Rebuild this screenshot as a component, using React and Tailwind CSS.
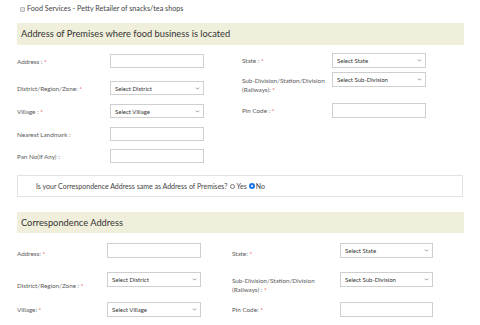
import { ChevronDown } from 'lucide-react';

const FONT = { fontFamily: 'Lato, "Open Sans", sans-serif' };

function Req() {
  return <span className="text-[#e53935]"> *</span>;
}

function TextBox({ w = 'w-[94px]', h = 'h-[14px]' }) {
  return <div className={`${w} ${h} border border-[#cfcfcf] bg-white`} />;
}

function SelectBox({ label, w = 'w-[94px]', h = 'h-[15px]' }) {
  return (
    <div className={`${w} ${h} flex items-center justify-between border border-[#cfcfcf] bg-white pl-[4px] pr-[3px] text-[6px] text-[#333]`}>
      <span>{label}</span>
      <ChevronDown className="h-[5px] w-[5px] text-[#555]" strokeWidth={3} />
    </div>
  );
}

function Label({ children, className = '' }) {
  return <div className={`text-[6.3px] leading-[9px] text-[#5a5a5a] ${className}`}>{children}</div>;
}

function SectionHeader({ title, h }) {
  return (
    <div className={`${h} flex items-center bg-[#f0efdc] pl-[4px] text-[9.3px] text-[#333]`}>
      {title}
    </div>
  );
}

export default function App() {
  return (
    <div className="min-h-[325px] w-[480px] bg-white pl-[17px] pr-[16px]" style={FONT}>
      {/* Business type */}
      <div className="flex h-[23px] items-start pt-[4px] pl-[3px]">
        <div className="flex items-center gap-[2px] text-[7.2px] text-[#444]">
          <span className="h-[5px] w-[5px] rounded-[1px] border border-[#bbb] bg-[#e6e6e6]" />
          <span>Food Services - Petty Retailer of snacks/tea shops</span>
        </div>
      </div>

      <SectionHeader title="Address of Premises where food business is located" h="h-[22px]" />

      <div className="flex pt-[9px]">
        <div className="flex w-[225px] flex-col">
          <div className="flex h-[14px] items-center">
            <Label className="w-[93px]">Address :<Req /></Label>
            <TextBox />
          </div>
          <div className="mt-[13px] flex h-[14px] items-center">
            <Label className="w-[93px]">District/Region/Zone:<Req /></Label>
            <SelectBox label="Select District" h="h-[14px]" />
          </div>
          <div className="mt-[9px] flex h-[14px] items-center">
            <Label className="w-[93px]">Village :<Req /></Label>
            <SelectBox label="Select Village" h="h-[14px]" />
          </div>
          <div className="mt-[9px] flex h-[14px] items-center">
            <Label className="w-[93px]">Nearest Landmark :</Label>
            <TextBox />
          </div>
          <div className="mt-[8px] flex h-[14px] items-center">
            <Label className="w-[93px]">Pan No(If Any) :</Label>
            <TextBox />
          </div>
        </div>

        <div className="flex flex-col">
          <div className="-mt-[1px] flex h-[15px] items-center">
            <Label className="w-[90px]">State :<Req /></Label>
            <SelectBox label="Select State" />
          </div>
          <div className="mt-[4px] flex items-start">
            <Label className="mt-[4px] w-[90px]">
              Sub-Division/Station/Division
              <br />
              (Railways):<Req />
            </Label>
            <SelectBox label="Select Sub-Division" />
          </div>
          <div className="mt-[9px] flex h-[15px] items-center">
            <Label className="w-[90px]">Pin Code :<Req /></Label>
            <TextBox h="h-[15px]" />
          </div>
        </div>
      </div>

      {/* Same address question */}
      <div className="mt-[12px] flex h-[22px] w-[446px] items-center border border-[#e3e3e3] pl-[18px] text-[7px] text-[#444]">
        <span>Is your Correspondence Address same as Address of Premises?</span>
        <span className="ml-[3px] flex items-center gap-[1px]">
          <span className="h-[5px] w-[5px] rounded-full border border-[#777] bg-white" />
          <span>Yes</span>
        </span>
        <span className="ml-[2px] flex items-center gap-[1px]">
          <span className="flex h-[6px] w-[6px] items-center justify-center rounded-full bg-[#1a73e8]">
            <span className="h-[2px] w-[2px] rounded-full bg-white" />
          </span>
          <span>No</span>
        </span>
      </div>

      <div className="mt-[15px]">
        <SectionHeader title="Correspondence Address" h="h-[21px]" />
      </div>

      <div className="pt-[10px]">
        <div className="flex h-[20px]">
          <Label className="mt-[6px] w-[90px]">Address:<Req /></Label>
          <div className="w-[125px]"><TextBox h="h-[15px]" /></div>
          <Label className="mt-[6px] w-[108px]">State:<Req /></Label>
          <SelectBox label="Select State" w="w-[93px]" />
        </div>
        <div className="mt-[9px] flex h-[26px]">
          <Label className="w-[90px] self-center">District/Region/Zone :<Req /></Label>
          <div className="w-[125px]"><SelectBox label="Select District" /></div>
          <Label className="w-[108px] self-center">
            Sub-Division/Station/Division
            <br />
            (Railways) :<Req />
          </Label>
          <SelectBox label="Select Sub-Division" w="w-[93px]" />
        </div>
        <div className="mt-[4px] flex h-[15px] items-center">
          <Label className="w-[90px]">Village:<Req /></Label>
          <div className="w-[125px]"><SelectBox label="Select Village" /></div>
          <Label className="w-[108px]">Pin Code:<Req /></Label>
          <TextBox w="w-[93px]" h="h-[15px]" />
        </div>
      </div>
    </div>
  );
}
